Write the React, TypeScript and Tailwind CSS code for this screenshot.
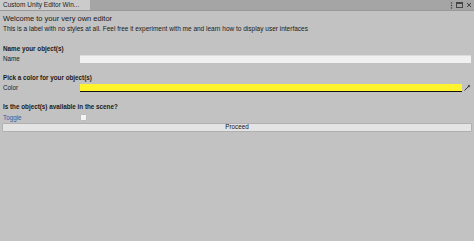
import React, { useState } from "react";

const App: React.FC = () => {
  const [name, setName] = useState("");
  const [available, setAvailable] = useState(false);

  return (
    <div className="h-[241px] w-[474px] overflow-hidden bg-[#c2c2c2] font-['Liberation_Sans',Arial,sans-serif] text-[#1a1a1a]">
      {/* window tab strip */}
      <div className="flex h-[11px] items-stretch justify-between border-b border-[#999] bg-[#a5a5a5]">
        <div className="flex w-[90px] items-center bg-[#cbcbcb] pl-[3px] text-[6.5px] leading-none text-[#222]">
          Custom Unity Editor Win...
        </div>
        <div className="flex items-center gap-[3px] pr-[2px] text-[#444]">
          <svg width="3" height="7" viewBox="0 0 3 7">
            <circle cx="1.5" cy="1" r="0.8" fill="#444" />
            <circle cx="1.5" cy="3.5" r="0.8" fill="#444" />
            <circle cx="1.5" cy="6" r="0.8" fill="#444" />
          </svg>
          <svg width="7" height="6" viewBox="0 0 7 6">
            <rect x="0.5" y="0.5" width="6" height="5" fill="none" stroke="#444" />
            <line x1="0.5" y1="1.5" x2="6.5" y2="1.5" stroke="#444" />
          </svg>
          <svg width="6" height="6" viewBox="0 0 6 6">
            <path d="M1 1 L5 5 M5 1 L1 5" stroke="#444" strokeWidth="1" />
          </svg>
        </div>
      </div>

      <div className="px-[3px]">
        <div className="mt-[2px] text-[7.5px] leading-[11px]">Welcome to your very own editor</div>
        <div className="text-[6.5px] leading-[10px]">
          This is a label with no styles at all. Feel free it experiment with me and learn how to display user interfaces
        </div>

        <div className="mt-[10px] text-[6.3px] font-bold leading-[10px]">Name your object(s)</div>
        <div className="flex h-[10px] items-center">
          <span className="w-[77px] text-[6.3px]">Name</span>
          <input
            value={name}
            onChange={(e) => setName(e.target.value)}
            className="h-[8px] flex-1 border-t border-[#dcdcdc] bg-[#f0f0f0] outline-none"
          />
        </div>

        <div className="mt-[9px] text-[6.3px] font-bold leading-[10px]">Pick a color for your object(s)</div>
        <div className="flex h-[10px] items-center">
          <span className="w-[77px] text-[6.3px]">Color</span>
          <div className="flex h-[8px] flex-1 flex-col">
            <div className="flex-1 bg-[#fff32d]" />
            <div className="h-[1px] bg-[#111]" />
          </div>
          <svg width="8" height="8" viewBox="0 0 8 8" className="ml-[1px]">
            <path d="M1.5 6.5 L5 3" stroke="#333" strokeWidth="1" />
            <path d="M4.5 2 L6 0.8 L7.2 2 L6 3.5 Z" fill="#333" />
          </svg>
        </div>

        <div className="mt-[9px] text-[6.3px] font-bold leading-[10px]">Is the object(s) available in the scene?</div>
        <div className="flex h-[11px] items-center">
          <span className="w-[77px] text-[6.3px] text-[#2a5fa8]">Toggle</span>
          <button
            type="button"
            onClick={() => setAvailable(!available)}
            className="h-[7px] w-[7px] rounded-[1px] border border-[#bdbdbd] bg-[#f4f4f4] text-[6px] leading-none"
          >
            {available ? "✓" : ""}
          </button>
        </div>

        <button
          type="button"
          className="-mx-[1px] flex h-[9px] w-[calc(100%+2px)] items-center justify-center rounded-[1px] border border-[#b0b0b0] bg-[#e4e4e4] text-[6.3px] leading-none text-[#111]"
        >
          Proceed
        </button>
      </div>
    </div>
  );
};

export default App;
